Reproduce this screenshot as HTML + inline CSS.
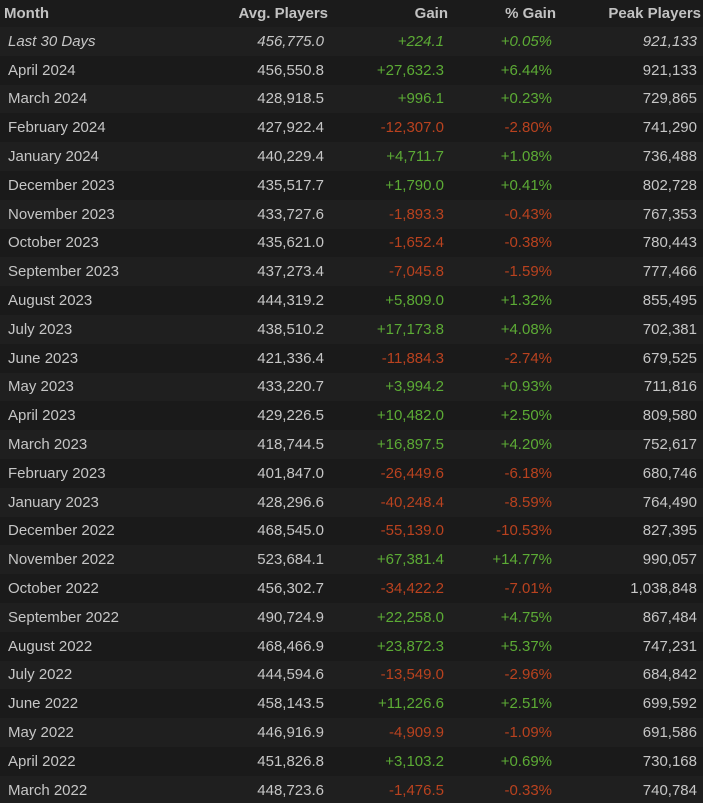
<!DOCTYPE html>
<html><head><meta charset="utf-8"><style>
html,body{margin:0;padding:0;background:#1b1b1b;width:703px;height:803px;overflow:hidden}
table{border-collapse:collapse;width:703px;font-family:"Liberation Sans",Arial,sans-serif;font-size:15px;color:#c6c6c6}
th{height:27px;font-weight:bold;color:#c2c2c2;text-align:right;padding:0 2px 0 0;background:#1b1b1b;vertical-align:middle}
th:first-child{text-align:left;padding-left:4px}
td{height:28.8px;padding:0 6px 0 0;text-align:right;vertical-align:middle}
td:first-child{text-align:left;padding-left:8px}
tr:nth-child(odd) td{background:#1f1f1f}
tr:nth-child(even) td{background:#1a1a1a}
.i td{font-style:italic}
.g{color:#5cab35}.r{color:#b9421f}
</style></head><body>
<table>
<colgroup><col style="width:180px"><col style="width:150px"><col style="width:120px"><col style="width:108px"><col style="width:145px"></colgroup>
<thead><tr><th>Month</th><th>Avg. Players</th><th>Gain</th><th>% Gain</th><th>Peak Players</th></tr></thead>
<tbody>
<tr class="i"><td>Last 30 Days</td><td>456,775.0</td><td class="g">+224.1</td><td class="g">+0.05%</td><td>921,133</td></tr>
<tr><td>April 2024</td><td>456,550.8</td><td class="g">+27,632.3</td><td class="g">+6.44%</td><td>921,133</td></tr>
<tr><td>March 2024</td><td>428,918.5</td><td class="g">+996.1</td><td class="g">+0.23%</td><td>729,865</td></tr>
<tr><td>February 2024</td><td>427,922.4</td><td class="r">-12,307.0</td><td class="r">-2.80%</td><td>741,290</td></tr>
<tr><td>January 2024</td><td>440,229.4</td><td class="g">+4,711.7</td><td class="g">+1.08%</td><td>736,488</td></tr>
<tr><td>December 2023</td><td>435,517.7</td><td class="g">+1,790.0</td><td class="g">+0.41%</td><td>802,728</td></tr>
<tr><td>November 2023</td><td>433,727.6</td><td class="r">-1,893.3</td><td class="r">-0.43%</td><td>767,353</td></tr>
<tr><td>October 2023</td><td>435,621.0</td><td class="r">-1,652.4</td><td class="r">-0.38%</td><td>780,443</td></tr>
<tr><td>September 2023</td><td>437,273.4</td><td class="r">-7,045.8</td><td class="r">-1.59%</td><td>777,466</td></tr>
<tr><td>August 2023</td><td>444,319.2</td><td class="g">+5,809.0</td><td class="g">+1.32%</td><td>855,495</td></tr>
<tr><td>July 2023</td><td>438,510.2</td><td class="g">+17,173.8</td><td class="g">+4.08%</td><td>702,381</td></tr>
<tr><td>June 2023</td><td>421,336.4</td><td class="r">-11,884.3</td><td class="r">-2.74%</td><td>679,525</td></tr>
<tr><td>May 2023</td><td>433,220.7</td><td class="g">+3,994.2</td><td class="g">+0.93%</td><td>711,816</td></tr>
<tr><td>April 2023</td><td>429,226.5</td><td class="g">+10,482.0</td><td class="g">+2.50%</td><td>809,580</td></tr>
<tr><td>March 2023</td><td>418,744.5</td><td class="g">+16,897.5</td><td class="g">+4.20%</td><td>752,617</td></tr>
<tr><td>February 2023</td><td>401,847.0</td><td class="r">-26,449.6</td><td class="r">-6.18%</td><td>680,746</td></tr>
<tr><td>January 2023</td><td>428,296.6</td><td class="r">-40,248.4</td><td class="r">-8.59%</td><td>764,490</td></tr>
<tr><td>December 2022</td><td>468,545.0</td><td class="r">-55,139.0</td><td class="r">-10.53%</td><td>827,395</td></tr>
<tr><td>November 2022</td><td>523,684.1</td><td class="g">+67,381.4</td><td class="g">+14.77%</td><td>990,057</td></tr>
<tr><td>October 2022</td><td>456,302.7</td><td class="r">-34,422.2</td><td class="r">-7.01%</td><td>1,038,848</td></tr>
<tr><td>September 2022</td><td>490,724.9</td><td class="g">+22,258.0</td><td class="g">+4.75%</td><td>867,484</td></tr>
<tr><td>August 2022</td><td>468,466.9</td><td class="g">+23,872.3</td><td class="g">+5.37%</td><td>747,231</td></tr>
<tr><td>July 2022</td><td>444,594.6</td><td class="r">-13,549.0</td><td class="r">-2.96%</td><td>684,842</td></tr>
<tr><td>June 2022</td><td>458,143.5</td><td class="g">+11,226.6</td><td class="g">+2.51%</td><td>699,592</td></tr>
<tr><td>May 2022</td><td>446,916.9</td><td class="r">-4,909.9</td><td class="r">-1.09%</td><td>691,586</td></tr>
<tr><td>April 2022</td><td>451,826.8</td><td class="g">+3,103.2</td><td class="g">+0.69%</td><td>730,168</td></tr>
<tr><td>March 2022</td><td>448,723.6</td><td class="r">-1,476.5</td><td class="r">-0.33%</td><td>740,784</td></tr>
</tbody></table>
</body></html>
